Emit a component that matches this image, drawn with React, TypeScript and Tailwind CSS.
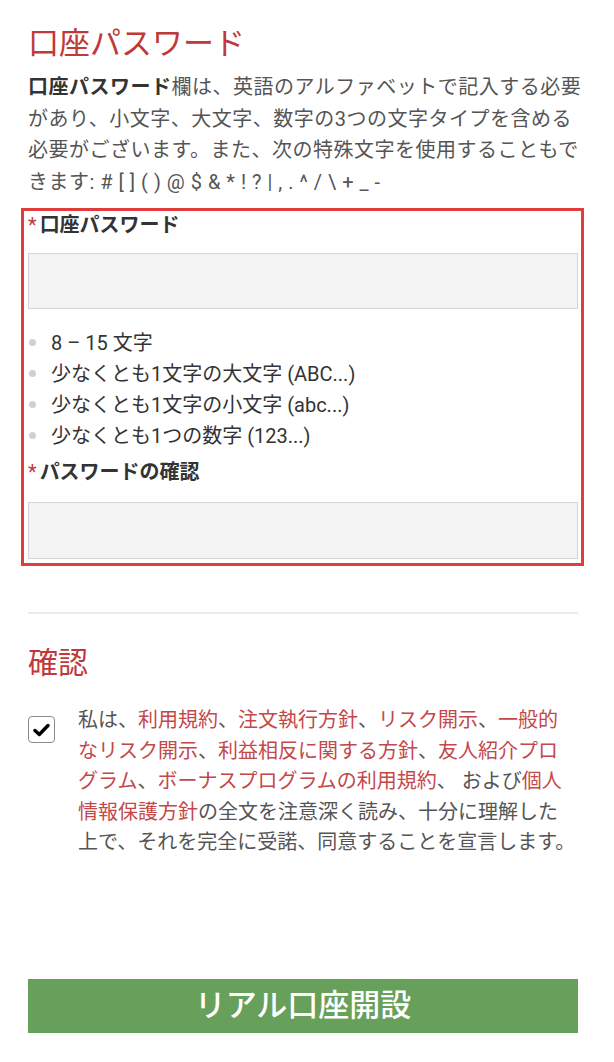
import React from "react";

const font = { fontFamily: "Roboto, 'Noto Sans CJK JP', sans-serif" };

function Bullet({ children }: { children: React.ReactNode }) {
  return (
    <li className="flex items-center h-[31px]">
      <span className="w-[7px] h-[7px] rounded-full bg-[#d0d0d0] ml-[1px] mr-[15px] shrink-0" />
      <span>{children}</span>
    </li>
  );
}

function Link({ children }: { children: React.ReactNode }) {
  return <span className="text-[#c4474a]">{children}</span>;
}

export default function App() {
  return (
    <div className="w-[614px] h-[1062px] bg-white overflow-hidden" style={font}>
      <div className="pl-[28px] pr-[36px] pt-[24px]">
        <h1 className="text-[31px] leading-[40px] text-[#c0393a] font-normal">口座パスワード</h1>
        <p className="mt-[8px] w-[560px] text-[20px] leading-[31.5px] text-[#555555] tracking-[0.5px]">
          <b className="font-bold text-[#333333]">口座パスワード</b>欄は、英語のアルファベットで記入する必要
          <br />
          があり、小文字、大文字、数字の3つの文字タイプを含める
          <br />
          必要がございます。また、次の特殊文字を使用することもで
          <br />
          きます: # [ ] ( ) @ $ & * ! ? | , . ^ / \ + _ -
        </p>

        <div className="mt-[10px] -ml-[7px] -mr-[6px] border-[3px] border-[#e23b3b] pl-[4px] pr-[3px] pt-[1px] pb-[4px]">
          <div className="text-[20px] leading-[26px] font-bold text-[#333333]">
            <span className="text-[#c0393a] font-normal mr-[3px]">*</span>口座パスワード
          </div>
          <div className="mt-[15px] h-[56px] bg-[#f4f4f4] border border-[#d4d4d4]" />
          <ul className="mt-[18px] text-[20px] text-[#333333]">
            <Bullet>8 – 15 文字</Bullet>
            <Bullet>少なくとも1文字の大文字 (ABC...)</Bullet>
            <Bullet>少なくとも1文字の小文字 (abc...)</Bullet>
            <Bullet>少なくとも1つの数字 (123...)</Bullet>
          </ul>
          <div className="mt-[8px] text-[20px] leading-[26px] font-bold text-[#333333]">
            <span className="text-[#c0393a] font-normal mr-[3px]">*</span>パスワードの確認
          </div>
          <div className="mt-[17px] h-[57px] bg-[#f4f4f4] border border-[#d4d4d4]" />
        </div>

        <div className="mt-[46px] h-[2px] bg-[#ebebeb]" />

        <h2 className="mt-[30px] text-[30px] leading-[38px] text-[#c0393a] font-normal">確認</h2>

        <div className="mt-[33px] flex items-start">
          <div className="mt-[1px] w-[27px] h-[27px] shrink-0 rounded-[4px] border-[1.5px] border-[#8a8a8a] bg-white flex items-center justify-center">
            <svg width="17" height="14" viewBox="0 0 17 14">
              <path d="M2 7.5 L6.3 11.5 L15 2.5" fill="none" stroke="#000" strokeWidth="3.4" strokeLinecap="round" strokeLinejoin="round" />
            </svg>
          </div>
          <p className="ml-[23px] w-[510px] whitespace-nowrap text-[20px] leading-[30.5px] text-[#555555] -mt-[10px]">
            私は、<Link>利用規約</Link>、<Link>注文執行方針</Link>、<Link>リスク開示</Link>、<Link>一般的</Link>
            <br />
            <Link>なリスク開示</Link>、<Link>利益相反に関する方針</Link>、<Link>友人紹介プロ</Link>
            <br />
            <Link>グラム</Link>、<Link>ボーナスプログラムの利用規約</Link>、 および<Link>個人</Link>
            <br />
            <Link>情報保護方針</Link>の全文を注意深く読み、十分に理解した
            <br />
            上で、それを完全に受諾、同意することを宣言します。
          </p>
        </div>

        <button className="mt-[121px] w-full h-[54px] bg-[#67a05a] text-white text-[31px] font-medium leading-none flex items-center justify-center">
          リアル口座開設
        </button>
      </div>
    </div>
  );
}
